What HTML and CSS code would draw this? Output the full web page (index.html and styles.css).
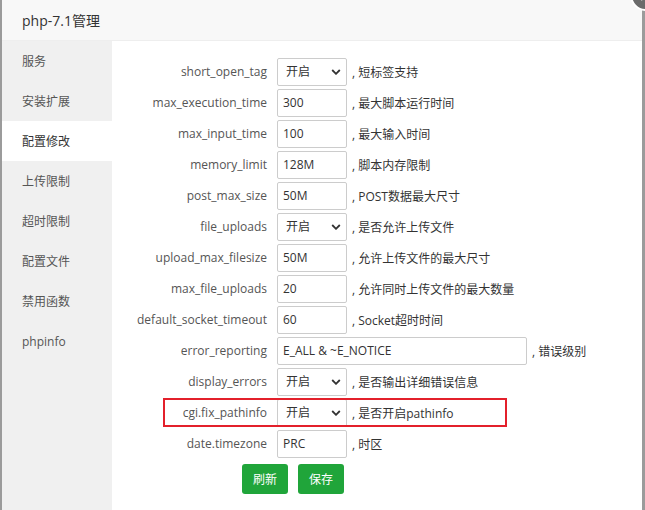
FILE: index.html
```html
<!DOCTYPE html>
<html lang="zh-CN">
<head>
    <meta charset="UTF-8">
    <title>php-7.1管理</title>
    <link rel="stylesheet" href="styles.css">
</head>
<body>
    <div class="layer">
        <div class="layer-title">php-7.1管理</div>
        <span class="layer-close"></span>

        <div class="layer-body">
            <ul class="tab-nav">
                <li>服务</li>
                <li>安装扩展</li>
                <li class="on">配置修改</li>
                <li>上传限制</li>
                <li>超时限制</li>
                <li>配置文件</li>
                <li>禁用函数</li>
                <li>phpinfo</li>
            </ul>

            <div class="tab-con">
                <div class="line">
                    <span class="tname">short_open_tag</span>
                    <select class="bt-input"><option>开启</option><option>关闭</option></select>
                    <span class="ps">, 短标签支持</span>
                </div>
                <div class="line">
                    <span class="tname">max_execution_time</span>
                    <input class="bt-input" type="text" value="300">
                    <span class="ps">, 最大脚本运行时间</span>
                </div>
                <div class="line">
                    <span class="tname">max_input_time</span>
                    <input class="bt-input" type="text" value="100">
                    <span class="ps">, 最大输入时间</span>
                </div>
                <div class="line">
                    <span class="tname">memory_limit</span>
                    <input class="bt-input" type="text" value="128M">
                    <span class="ps">, 脚本内存限制</span>
                </div>
                <div class="line">
                    <span class="tname">post_max_size</span>
                    <input class="bt-input" type="text" value="50M">
                    <span class="ps">, POST数据最大尺寸</span>
                </div>
                <div class="line">
                    <span class="tname">file_uploads</span>
                    <select class="bt-input"><option>开启</option><option>关闭</option></select>
                    <span class="ps">, 是否允许上传文件</span>
                </div>
                <div class="line">
                    <span class="tname">upload_max_filesize</span>
                    <input class="bt-input" type="text" value="50M">
                    <span class="ps">, 允许上传文件的最大尺寸</span>
                </div>
                <div class="line">
                    <span class="tname">max_file_uploads</span>
                    <input class="bt-input" type="text" value="20">
                    <span class="ps">, 允许同时上传文件的最大数量</span>
                </div>
                <div class="line">
                    <span class="tname">default_socket_timeout</span>
                    <input class="bt-input" type="text" value="60">
                    <span class="ps">, Socket超时时间</span>
                </div>
                <div class="line">
                    <span class="tname">error_reporting</span>
                    <input class="bt-input wide" type="text" value="E_ALL &amp; ~E_NOTICE">
                    <span class="ps">, 错误级别</span>
                </div>
                <div class="line">
                    <span class="tname">display_errors</span>
                    <select class="bt-input"><option>开启</option><option>关闭</option></select>
                    <span class="ps">, 是否输出详细错误信息</span>
                </div>
                <div class="line">
                    <span class="tname">cgi.fix_pathinfo</span>
                    <select class="bt-input"><option>开启</option><option>关闭</option></select>
                    <span class="ps">, 是否开启pathinfo</span>
                    <span class="mark"></span>
                </div>
                <div class="line">
                    <span class="tname">date.timezone</span>
                    <input class="bt-input" type="text" value="PRC">
                    <span class="ps">, 时区</span>
                </div>

                <div class="btns">
                    <button class="btn-success">刷新</button>
                    <button class="btn-success">保存</button>
                </div>
            </div>
        </div>
    </div>
</body>
</html>
```

FILE: styles.css
```css
* {
    margin: 0;
    padding: 0;
    box-sizing: border-box;
}

body {
    background-color: #9b9b9b;
    font-family: "Open Sans", "Noto Sans CJK SC", sans-serif;
    font-size: 12px;
    color: #333;
    overflow: hidden;
}

.layer {
    position: relative;
    margin-left: 2px;
    width: 640px;
    height: 510px;
    background-color: #fff;
}

.layer-title {
    height: 41px;
    line-height: 41px;
    padding-left: 20px;
    background-color: #f8f8f8;
    border-bottom: 1px solid #eee;
    font-size: 14px;
    color: #333;
}

/* close button sits over the corner of the dialog */
.layer-close {
    position: absolute;
    left: 628px;
    top: -21px;
    width: 32px;
    height: 32px;
    border-radius: 50%;
    background-color: #6b6b6b;
    border: 2px solid #fff;
}

.layer-close::before,
.layer-close::after {
    content: "";
    position: absolute;
    left: 7px;
    top: 13px;
    width: 14px;
    height: 2px;
    background-color: #fff;
    transform: rotate(45deg);
}

.layer-close::after {
    transform: rotate(-45deg);
}

.layer-body {
    display: flex;
    height: 469px;
}

.tab-nav {
    list-style: none;
    width: 110px;
    background-color: #f0f0f0;
}

.tab-nav li {
    height: 40px;
    line-height: 41px;
    padding-left: 20px;
    font-size: 12px;
    color: #555;
}

.tab-nav li.on {
    background-color: #fff;
    color: #333;
}

.tab-con {
    flex: 1;
    padding: 15px 0 0 15px;
}

.line {
    position: relative;
    display: flex;
    align-items: center;
    height: 31px;
}

.tname {
    width: 150px;
    padding-right: 10px;
    text-align: right;
    color: #555;
}

.bt-input {
    width: 70px;
    height: 28px;
    padding: 0 5px;
    border: 1px solid #ccc;
    border-radius: 2px;
    font-family: inherit;
    font-size: 12px;
    color: #333;
    background-color: #fff;
    outline: none;
}

.bt-input.wide {
    width: 250px;
}

select.bt-input {
    appearance: none;
    -webkit-appearance: none;
    padding-left: 8px;
    background-image: url("data:image/svg+xml,%3Csvg xmlns='http://www.w3.org/2000/svg' width='10' height='6' viewBox='0 0 10 6'%3E%3Cpolyline points='1.2,1 5,4.8 8.8,1' fill='none' stroke='%23333' stroke-width='1.8'/%3E%3C/svg%3E");
    background-repeat: no-repeat;
    background-position: right 5px center;
    background-size: 10px 6px;
}

.ps {
    margin-left: 5px;
    color: #333;
}

/* red annotation frame around the cgi.fix_pathinfo row */
.mark {
    position: absolute;
    left: 36px;
    top: 1px;
    width: 344px;
    height: 29px;
    border: 2px solid #e3202b;
    pointer-events: none;
}

.btns {
    display: flex;
    gap: 10px;
    margin-top: 5px;
    padding-left: 115px;
}

.btn-success {
    width: 46px;
    height: 30px;
    border: none;
    border-radius: 3px;
    background-color: #20a53a;
    color: #fff;
    font-family: inherit;
    font-size: 12px;
    cursor: pointer;
}

.btn-success:hover {
    background-color: #10952a;
}
```
